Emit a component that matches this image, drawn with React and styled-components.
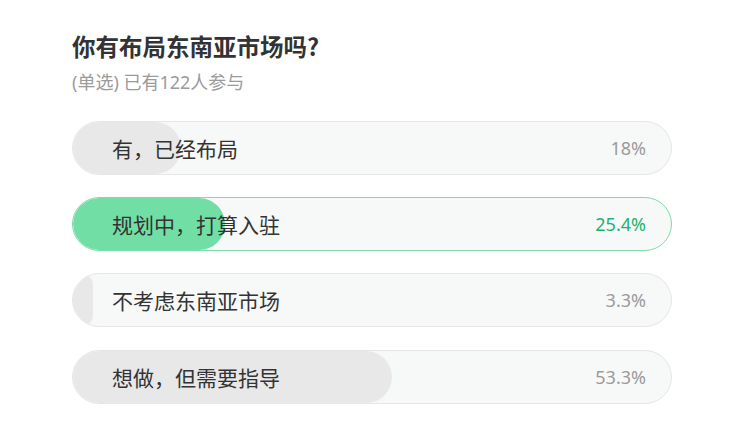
import React from 'react';
import styled, { createGlobalStyle } from 'styled-components';

const GlobalStyle = createGlobalStyle`
    body {
        margin: 0;
        background: #fff;
        font-family: "Noto Sans", "Noto Sans CJK SC", sans-serif;
    }
`;

const opciones = [
    { texto: '有，已经布局', valor: 18 },
    { texto: '规划中，打算入驻', valor: 25.4, elegida: true },
    { texto: '不考虑东南亚市场', valor: 3.3 },
    { texto: '想做，但需要指导', valor: 53.3 },
];

const App = () => {
    return (
        <>
            <GlobalStyle />
            <Encuesta>
                <Titulo>你有布局东南亚市场吗?</Titulo>
                <Subtitulo>(单选) 已有122人参与</Subtitulo>
                <Lista>
                    {opciones.map((op) => (
                        <Opcion key={op.texto} $elegida={op.elegida}>
                            <Relleno $elegida={op.elegida} style={{ width: `${op.valor}%` }} />
                            <Etiqueta>{op.texto}</Etiqueta>
                            <Porcentaje $elegida={op.elegida}>{op.valor}%</Porcentaje>
                        </Opcion>
                    ))}
                </Lista>
            </Encuesta>
        </>
    );
};

export default App;

const Encuesta = styled.div`
    width: 600px;
    padding: 31px 0 0 72px;
`;

const Titulo = styled.h2`
    margin: 0;
    font-size: 23.5px;
    line-height: 30px;
    font-weight: 700;
    color: #333;
    font-family: "Noto Sans CJK SC", sans-serif;
`;

const Subtitulo = styled.div`
    margin-top: 9px;
    font-size: 18px;
    line-height: 24px;
    color: #9b9b9b;
    font-family: "Noto Sans", "Noto Sans CJK SC", sans-serif;
`;

const Lista = styled.div`
    margin-top: 26.7px;
    display: flex;
    flex-direction: column;
    gap: 22.3px;
`;

const Opcion = styled.div`
    position: relative;
    box-sizing: border-box;
    height: 54px;
    border: 1px solid ${(p) => (p.$elegida ? '#7fdcab' : '#e6e6e6')};
    border-radius: 27px;
    background: #f7f8f8;
    display: flex;
    align-items: center;
    justify-content: space-between;
    padding: 0 25px 0 39px;
    overflow: hidden;
`;

const Relleno = styled.div`
    position: absolute;
    top: 0;
    left: 0;
    bottom: 0;
    border-radius: 26px;
    background: ${(p) => (p.$elegida ? '#71dea6' : '#e8e8e8')};
`;

const Etiqueta = styled.span`
    position: relative;
    font-size: 21px;
    color: #333;
    font-family: "Noto Sans CJK SC", sans-serif;
`;

const Porcentaje = styled.span`
    position: relative;
    font-size: 18px;
    color: ${(p) => (p.$elegida ? '#1db36b' : '#9b9b9b')};
`;
